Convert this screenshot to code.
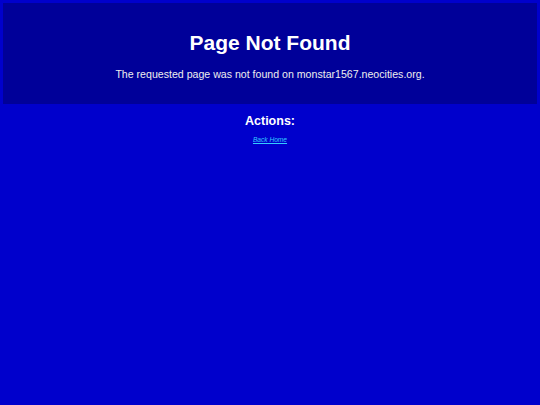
export default function App() {
  return (
    <div className="min-h-[405px] w-full bg-[#0000cc] p-[3px] text-center font-['Liberation_Sans',Arial,sans-serif] text-white">
      <div className="bg-[#000099] pb-[23px] pt-[28px]">
        <h1 className="text-[21px] font-bold leading-[24px]">Page Not Found</h1>
        <p className="mt-[13px] text-[10.6px] leading-[13px] text-[#eeeeee]">
          The requested page was not found on monstar1567.neocities.org.
        </p>
      </div>
      <h2 className="mt-[10px] text-[12.5px] font-bold leading-[15px]">Actions:</h2>
      <div className="mt-[7px] text-[6.6px] leading-[8px]">
        <a href="#" className="italic text-[#33ccff] underline">
          Back Home
        </a>
      </div>
    </div>
  );
}
